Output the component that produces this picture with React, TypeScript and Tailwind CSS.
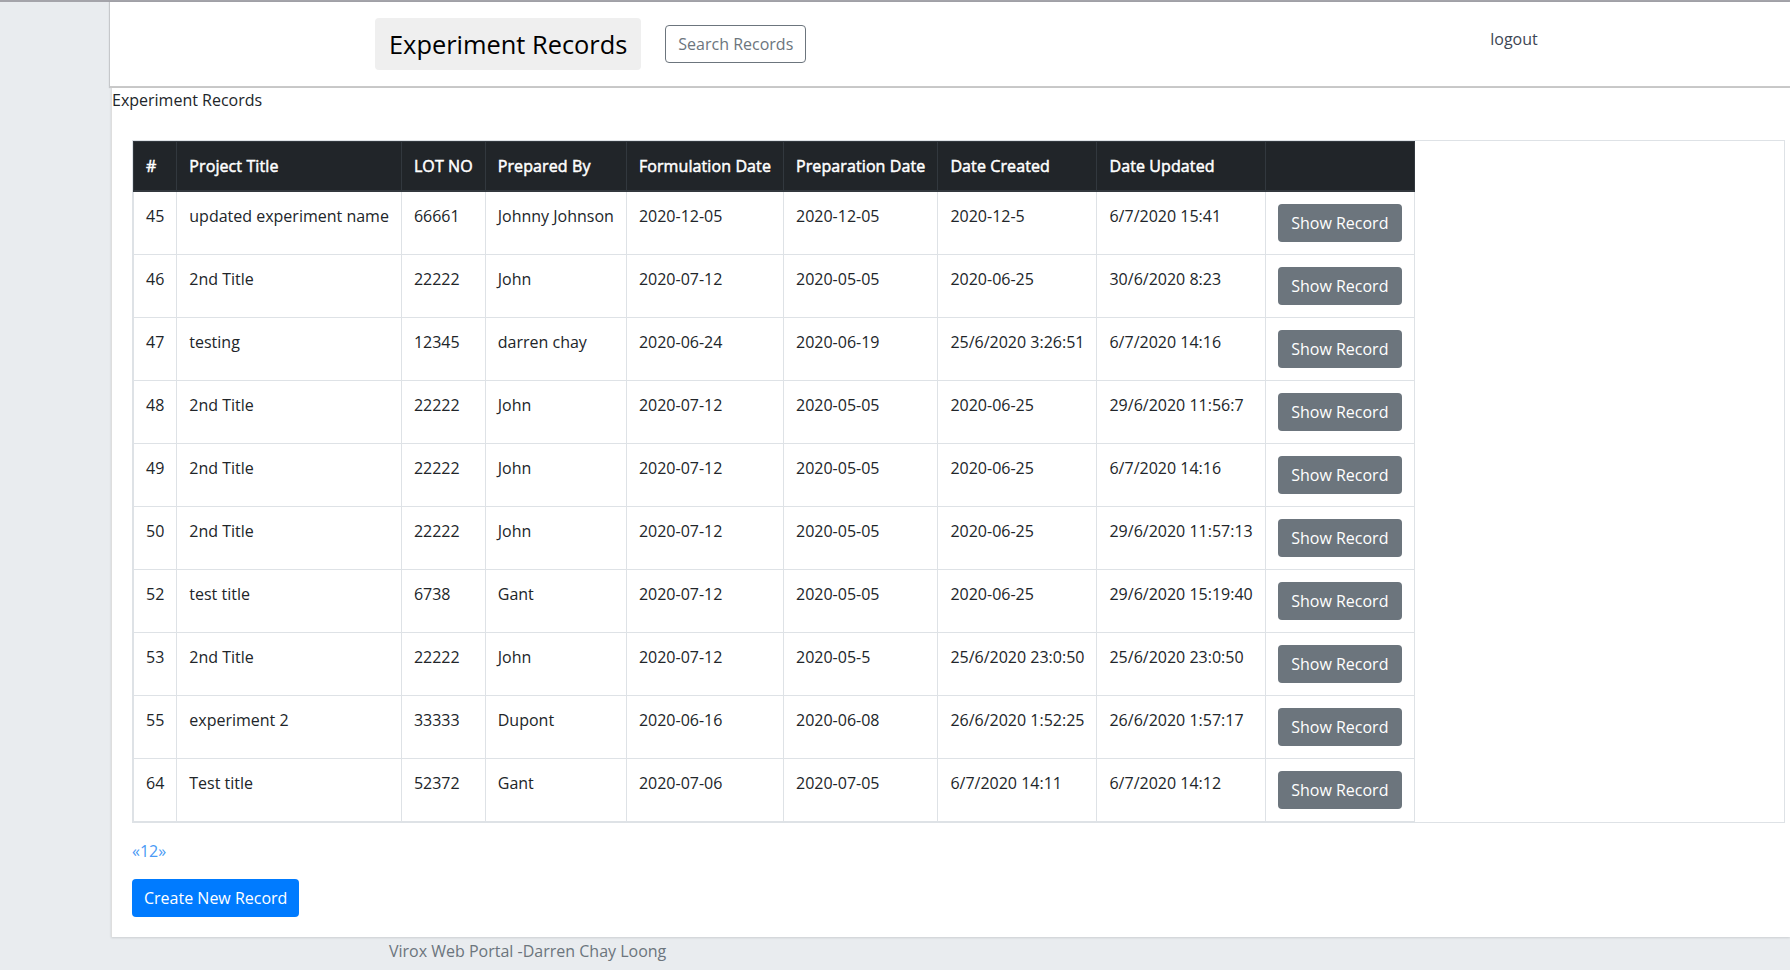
import React from "react";

const rows: string[][] = [
  ["45", "updated experiment name", "66661", "Johnny Johnson", "2020-12-05", "2020-12-05", "2020-12-5", "6/7/2020 15:41"],
  ["46", "2nd Title", "22222", "John", "2020-07-12", "2020-05-05", "2020-06-25", "30/6/2020 8:23"],
  ["47", "testing", "12345", "darren chay", "2020-06-24", "2020-06-19", "25/6/2020 3:26:51", "6/7/2020 14:16"],
  ["48", "2nd Title", "22222", "John", "2020-07-12", "2020-05-05", "2020-06-25", "29/6/2020 11:56:7"],
  ["49", "2nd Title", "22222", "John", "2020-07-12", "2020-05-05", "2020-06-25", "6/7/2020 14:16"],
  ["50", "2nd Title", "22222", "John", "2020-07-12", "2020-05-05", "2020-06-25", "29/6/2020 11:57:13"],
  ["52", "test title", "6738", "Gant", "2020-07-12", "2020-05-05", "2020-06-25", "29/6/2020 15:19:40"],
  ["53", "2nd Title", "22222", "John", "2020-07-12", "2020-05-5", "25/6/2020 23:0:50", "25/6/2020 23:0:50"],
  ["55", "experiment 2", "33333", "Dupont", "2020-06-16", "2020-06-08", "26/6/2020 1:52:25", "26/6/2020 1:57:17"],
  ["64", "Test title", "52372", "Gant", "2020-07-06", "2020-07-05", "6/7/2020 14:11", "6/7/2020 14:12"],
];

const headers = ["#", "Project Title", "LOT NO", "Prepared By", "Formulation Date", "Preparation Date", "Date Created", "Date Updated", ""];

export default function App() {
  return (
    <div className="min-h-[970px] bg-[#e9ecef] font-['Open_Sans',sans-serif] text-[16px] leading-6 text-[#212529] border-t-2 border-[#a4a4aa]">
      <div className="flex">
        <div className="w-[110px] shrink-0" />
        <div className="flex-1 min-w-0">
          <header className="h-[86px] bg-white border-b-2 border-[#c9c9c9] shadow-[-1px_0_1px_rgba(0,0,0,0.15)] flex items-center pl-[265px]">
            <div className="bg-[#efefef] rounded-[4px] h-[52px] px-[14px] flex items-center text-[25.4px] leading-[30px] text-black">
              Experiment Records
            </div>
            <button className="ml-[24px] h-[38px] px-[12px] border border-[#6c757d] rounded-[4px] text-[#6c757d] bg-white">
              Search Records
            </button>
            <a className="ml-[684px] mb-[10px] text-[#3d4654]">logout</a>
          </header>
          <main className="ml-[1px] bg-white border-l border-[#dedede] shadow-[0_1px_2px_rgba(0,0,0,0.12)] pb-[20px]">
            <div>Experiment Records</div>
            <div className="ml-[20px] mr-[5px] mt-[28px] border border-[#dee2e6]">
              <table className="border-collapse whitespace-nowrap">
                <thead>
                  <tr className="bg-[#212529] text-white">
                    {headers.map((h, i) => (
                      <th
                        key={i}
                        className="border border-[#32383e] border-b-2 px-[12px] py-[12px] text-left font-normal tracking-[0.1px] [-webkit-text-stroke:0.5px_white] align-bottom"
                      >
                        {h}
                      </th>
                    ))}
                  </tr>
                </thead>
                <tbody>
                  {rows.map((r) => (
                    <tr key={r[0]}>
                      {r.map((c, i) => (
                        <td key={i} className="border border-[#dee2e6] p-[12px] align-top">
                          {c}
                        </td>
                      ))}
                      <td className="border border-[#dee2e6] p-[12px] align-top">
                        <button className="h-[38px] px-[13.5px] rounded-[4px] bg-[#6c757d] text-white">
                          Show Record
                        </button>
                      </td>
                    </tr>
                  ))}
                </tbody>
              </table>
            </div>
            <div className="ml-[20px] mt-[16px] text-[#4a9af5]">«12»</div>
            <button className="ml-[20px] mt-[16px] h-[38px] px-[12px] rounded-[4px] bg-[#007bff] text-white">
              Create New Record
            </button>
          </main>
          <footer className="pl-[279px] pt-[2px] text-[#6c757d]">Virox Web Portal -Darren Chay Loong</footer>
        </div>
      </div>
    </div>
  );
}
